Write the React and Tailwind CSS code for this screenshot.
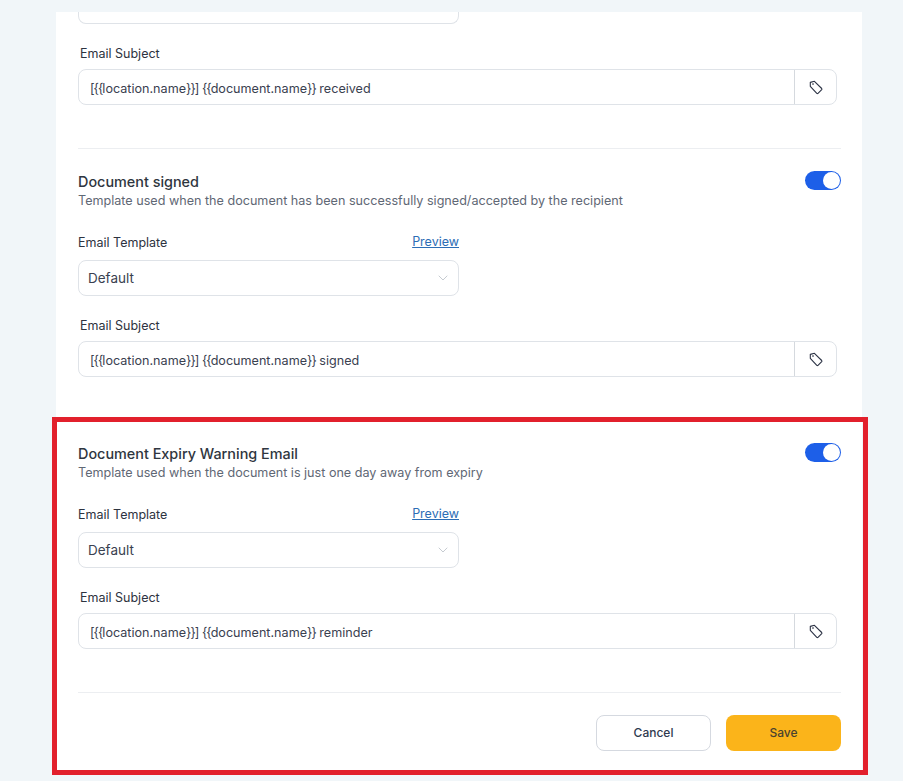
import { ChevronDown } from 'lucide-react'

// the braces sit tighter than Inter sets them, so they get their own tracking
function SubjectText({ value }) {
  return value.split(/([{}[\]]+)/).map((part, i) =>
    i % 2 === 1 ? <span key={i} className="tracking-[-1px]">{part}</span> : part
  )
}

function TagIcon() {
  return (
    <svg width="14" height="15" viewBox="0 0 14 15" fill="none" stroke="#2c3345" strokeWidth="1.1" strokeLinejoin="round">
      <path d="M1.3 2.4 L5.4 1.3 L12.7 8.5 Q13.2 9.1 12.7 9.7 L9 13.4 Q8.4 13.9 7.8 13.4 L1.3 6.3 Z" />
      <circle cx="4" cy="4" r="0.5" fill="#2c3345" strokeWidth="0.6" />
    </svg>
  )
}

function SubjectInput({ value }) {
  return (
    <div className="flex h-9 w-[759px] rounded-lg border border-[#dfe3e8] bg-white">
      <div className="flex flex-1 items-center pt-1 pl-[11px] text-[12.6px] text-[#3a4150]">
        <span><SubjectText value={value} /></span>
      </div>
      <div className="flex w-[42px] items-center justify-center border-l border-[#d5d9de]">
        <TagIcon />
      </div>
    </div>
  )
}

function TemplateSection({ title, description, subject }) {
  return (
    <div>
      <div className="flex items-start justify-between">
        <div>
          <h3 className="h-5 text-[14.4px] leading-5 font-medium text-[#2f3640]">{title}</h3>
          <p className="h-[17px] text-[12.6px] leading-[17px] text-[#5f6875]">{description}</p>
        </div>
        <div className="-mt-px flex h-[19px] w-9 justify-end rounded-full bg-[#1d5fe8] p-px">
          <div className="h-[17px] w-[17px] rounded-full bg-white" />
        </div>
      </div>
      <div className="mt-6 flex h-[18px] w-[381px] items-center justify-between">
        <span className="pt-[3px] text-[12.5px] text-[#2d3340]">Email Template</span>
        <a className="text-[12.5px] text-[#2c6db5] underline">Preview</a>
      </div>
      <div className="mt-[9px] flex h-9 w-[381px] items-center justify-between rounded-lg border border-[#dfe3e8] bg-white pr-[7px] pl-[9px]">
        <span className="pt-px text-[13.5px] text-[#3a4150]">Default</span>
        <ChevronDown size={16} strokeWidth={1} className="text-[#a9b0ba]" />
      </div>
      <label className="mt-[21px] block h-[17px] pl-0.5 text-[12.5px] leading-[18px] text-[#2d3340]">Email Subject</label>
      <div className="mt-[7px]">
        <SubjectInput value={subject} />
      </div>
    </div>
  )
}

export default function App() {
  return (
    <div className="relative h-screen overflow-hidden bg-[#f1f6f9] pt-3 font-['Inter',sans-serif]">
      <div className="ml-14 h-[800px] w-[806px] bg-white pr-[21px] pl-[22px]">
        <div className="h-3 w-[381px] rounded-b-lg border-x border-b border-[#dfe3e8]" />
        <label className="mt-[21px] block h-[17px] pl-0.5 text-[12.5px] leading-[18px] text-[#2d3340]">Email Subject</label>
        <div className="mt-[7px]">
          <SubjectInput value="[{{location.name}}] {{document.name}} received" />
        </div>
        <hr className="mt-[43px] mb-[23px] border-[#eceef1]" />
        <TemplateSection
          title="Document signed"
          description="Template used when the document has been successfully signed/accepted by the recipient"
          subject="[{{location.name}}] {{document.name}} signed"
        />
        <hr className="mt-[43px] mb-[23px] border-[#eceef1]" />
        <TemplateSection
          title="Document Expiry Warning Email"
          description="Template used when the document is just one day away from expiry"
          subject="[{{location.name}}] {{document.name}} reminder"
        />
        <hr className="mt-[43px] border-[#eceef1]" />
        <div className="mt-[22px] flex justify-end gap-[15px]">
          <button className="h-9 w-[115px] rounded-lg border border-[#d5d9e0] bg-white text-xs font-medium text-[#2f3a4f]">Cancel</button>
          <button className="h-9 w-[115px] rounded-lg bg-[#fbb41a] text-xs font-medium text-[#4a4230]">Save</button>
        </div>
      </div>
      {/* red highlight drawn over the last section */}
      <div className="pointer-events-none absolute top-[417px] left-[52px] h-[358px] w-[816px] border-[5px] border-[#e2202c]" />
      <div className="absolute top-[775px] left-0 h-2 w-full bg-[#f1f6f9]" />
    </div>
  )
}
